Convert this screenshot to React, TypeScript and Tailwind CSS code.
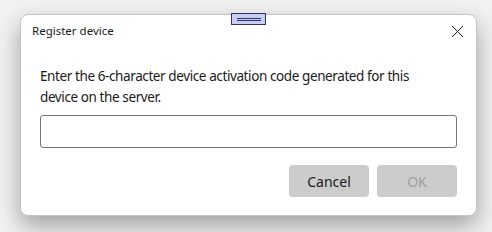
import { X } from 'lucide-react'

export default function App() {
  return (
    <div
      className="w-[492px] h-[232px] bg-[#f2f2f2] pt-[14px] pl-[20px] overflow-hidden"
      style={{ fontFamily: '"Noto Sans", "Open Sans", sans-serif' }}
    >
      <div className="relative w-[457px] h-[202px] bg-white rounded-[8px] border border-[#c4c4c4] shadow-[0_10px_24px_rgba(0,0,0,0.34)] flex flex-col">
        {/* drag handle */}
        <div className="absolute left-[210px] -top-[2px] w-[35px] h-[12px] bg-[#c7cff0] border border-[#2e3370] flex flex-col items-center justify-center gap-[1px]">
          <div className="w-[24px] h-px bg-[#2e3370]" />
          <div className="w-[24px] h-px bg-[#2e3370]" />
        </div>

        {/* header */}
        <div className="h-[32px] flex items-center justify-between pl-[11px] pr-[8px]">
          <span className="text-[11.5px] text-[#1a1a1a]">Register device</span>
          <X className="w-[21px] h-[21px] text-[#1a1a1a]" strokeWidth={1.1} />
        </div>

        {/* body */}
        <div className="px-[19px] mt-[19px]">
          <p className="text-[13.5px] leading-[21px] text-[#1a1a1a] tracking-[-0.4px]">
            Enter the 6-character device activation code generated for this
            <br />
            device on the server.
          </p>
          <input
            className="mt-[7px] w-full h-[33px] border border-[#757575] rounded-[3px] outline-none px-2"
            type="text"
          />
          <div className="mt-[17px] flex justify-end gap-[8px]">
            <button className="w-[80px] h-[32px] rounded-[4px] bg-[#cccccc] text-[14px] text-[#1a1a1a]">
              Cancel
            </button>
            <button className="w-[80px] h-[32px] rounded-[4px] bg-[#cccccc] text-[14px] text-[#a0a0a0]" disabled>
              OK
            </button>
          </div>
        </div>
      </div>
    </div>
  )
}
